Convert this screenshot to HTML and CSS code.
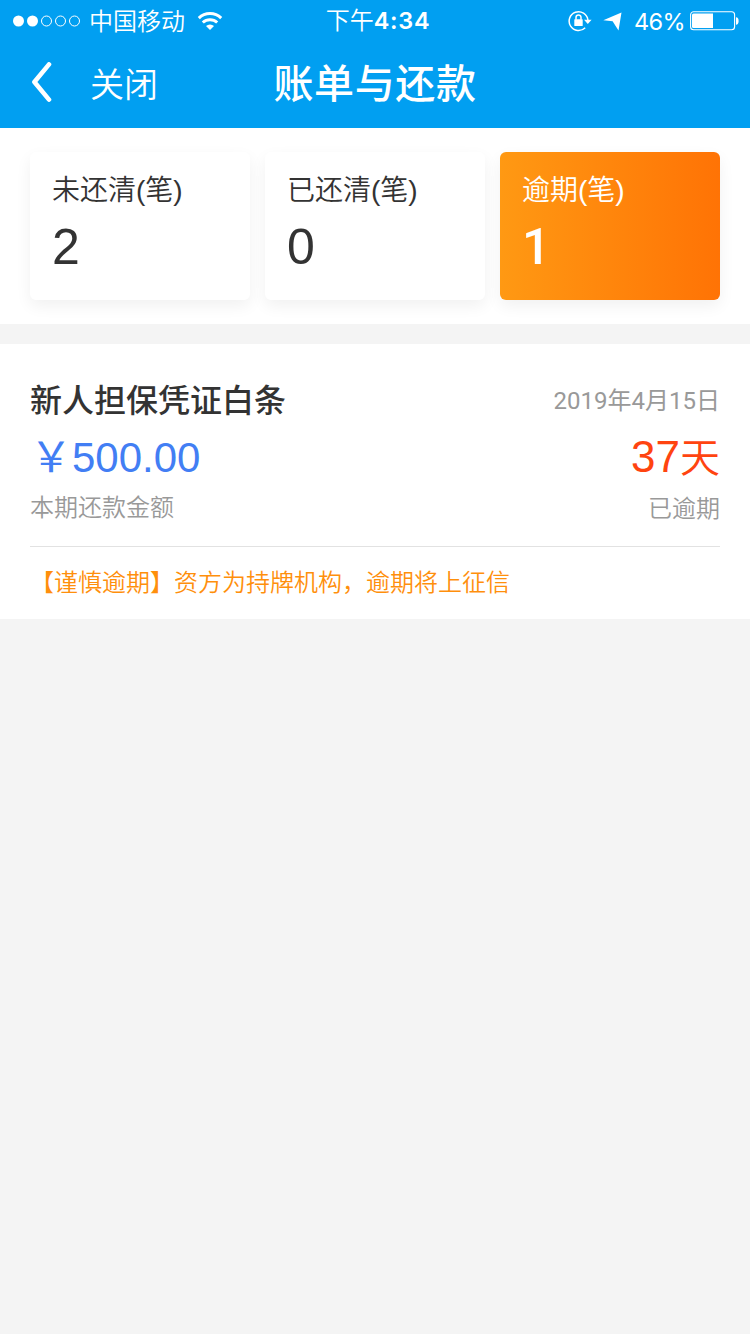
FILE: index.html
```html
<!DOCTYPE html>
<html lang="zh-CN">
<head>
<meta charset="utf-8">
<title>账单与还款</title>
<link rel="stylesheet" href="styles.css">
</head>
<body>
<header class="header">
  <div class="status">
    <div class="status-left">
      <svg class="signal" width="68" height="12" viewBox="0 0 68 12" fill="none" stroke="#fff">
        <circle cx="5.5" cy="6" r="5.5" fill="#fff" stroke="none"/>
        <circle cx="19.5" cy="6" r="5.5" fill="#fff" stroke="none"/>
        <circle cx="33.5" cy="6" r="5"/>
        <circle cx="47.5" cy="6" r="5"/>
        <circle cx="61.5" cy="6" r="5"/>
      </svg>
      <span class="carrier">中国移动</span>
      <svg class="wifi" width="26" height="20" viewBox="0 0 26 20" fill="none" stroke="#fff" stroke-width="3">
        <path d="M1.8 7.1a16.2 16.2 0 0 1 22.4 0"/>
        <path d="M5.8 11.5a10.5 10.5 0 0 1 14.4 0"/>
        <path d="M13 19L9 15a6 6 0 0 1 8 0z" fill="#fff" stroke="none"/>
      </svg>
    </div>
    <div class="clock">下午<b class="clock-digits">4:34</b></div>
    <div class="status-right">
      <svg class="lock" width="24" height="22" viewBox="0 0 24 22" fill="none" stroke="#fff">
        <path d="M17.2 17.8A9.4 9.4 0 1 1 19.9 10" stroke-width="1.5"/>
        <path d="M16 9.8h7.6L19.8 14z" fill="#fff" stroke="none"/>
        <rect x="6.3" y="9.2" width="8.4" height="6.8" rx="0.6" fill="#fff" stroke="none"/>
        <path d="M8 9.8V7.4a2.5 2.5 0 0 1 5 0v2.4" stroke-width="1.5"/>
      </svg>
      <svg class="arrow" width="19" height="19" viewBox="0 0 19 19" fill="#fff"><path d="M18.5 0.4L0.3 8.3l9.3 1 5.9 9.3z"/></svg>
      <span class="percent">46%</span>
      <svg class="battery" width="49" height="20" viewBox="0 0 49 20" fill="#fff">
        <rect x="0.6" y="0.8" width="44" height="18" rx="3" fill="none" stroke="#fff" stroke-width="1.1"/>
        <path d="M3.5 2.5H23v14.6H3.5a1.5 1.5 0 0 1-1.5-1.5V4a1.5 1.5 0 0 1 1.5-1.5z"/>
        <path d="M46 6.3a2.6 3.7 0 0 1 0 7.4z"/>
      </svg>
    </div>
  </div>
  <nav class="nav">
    <div class="nav-left">
      <svg width="22" height="40" viewBox="0 0 22 40" fill="none" stroke="#fff" stroke-width="4.6" stroke-linecap="round" stroke-linejoin="round"><path d="M19 2.4L4.4 20 19 37.6"/></svg>
      <span class="close">关闭</span>
    </div>
    <h1 class="title">账单与还款</h1>
  </nav>
</header>
<section class="summary">
  <div class="card"><div class="card-label">未还清(笔)</div><div class="card-count">2</div></div>
  <div class="card"><div class="card-label">已还清(笔)</div><div class="card-count">0</div></div>
  <div class="card card-active"><div class="card-label">逾期(笔)</div><div class="card-count">1</div></div>
</section>
<section class="bill">
  <div class="row row-head"><h2 class="name">新人担保凭证白条</h2><span class="date">2019年4月15日</span></div>
  <div class="row row-value"><span class="amount">￥500.00</span><span class="days">37<span class="unit">天</span></span></div>
  <div class="row row-note"><span>本期还款金额</span><span class="overdue">已逾期</span></div>
  <p class="warning">【谨慎逾期】资方为持牌机构，逾期将上征信</p>
</section>
</body>
</html>
```
FILE: styles.css
```css
* { box-sizing: border-box; margin: 0; padding: 0; }
body {
  background: #f4f4f4;
  color: #333;
  font-family: "Liberation Sans", "Noto Sans CJK SC", sans-serif;
  font-weight: 350;
  min-height: 1334px;
}
svg { display: block; flex: none; }
.header { height: 128px; background: #019ff1; color: #fff; }
.status {
  display: grid;
  grid-template-columns: 1fr auto 1fr;
  height: 40px;
  padding: 0 11px 0 13px;
  font-size: 24px;
  line-height: 40px;
  white-space: nowrap;
}
.status-left, .status-right { display: flex; align-items: center; }
.status-right { justify-content: flex-end; }
.carrier { margin-left: 8px; padding-top: 2px; }
.wifi { margin-left: 12px; }
.clock { padding: 1px 0 0 4px; }
.clock-digits { font-family: Inter, sans-serif; font-weight: 600; font-size: 23.5px; letter-spacing: 0.7px; }
.arrow { margin-left: 11px; }
.percent { margin-left: 12px; padding-top: 1px; font-family: Inter, sans-serif; font-size: 23.5px; letter-spacing: -0.6px; font-weight: 400; }
.battery { margin-left: 5px; }
.nav {
  display: grid;
  grid-template-columns: 1fr auto 1fr;
  align-items: center;
  height: 84px;
  padding: 0 30px;
}
.nav-left { display: flex; align-items: center; }
.close { margin-left: 38px; padding-top: 5px; font-size: 34px; line-height: 40px; }
.title { padding-top: 3px; font-size: 40px; font-weight: 500; line-height: 50px; letter-spacing: 0.6px; }
.summary {
  display: grid;
  grid-template-columns: repeat(3, 1fr);
  gap: 15px;
  height: 196px;
  padding: 24px 30px;
  background: #fff;
}
.card {
  padding: 19px 22px;
  border-radius: 6px;
  background: #fff;
  box-shadow: 0 6px 16px rgba(0, 0, 0, 0.06);
}
.card-active { color: #fff; background: linear-gradient(90deg, #ff9913, #ff7305); }
.card-label { font-size: 28px; line-height: 40px; }
.card-count { font-size: 50px; font-weight: 400; line-height: 56px; margin-top: 8px; }
.card-active .card-count { font-family: Roboto, sans-serif; font-weight: 500; }
.bill { margin-top: 20px; height: 275px; padding: 29px 30px 0; background: #fff; }
.row { display: flex; align-items: center; justify-content: space-between; }
.row-head { height: 50px; }
.name { font-size: 32px; font-weight: 500; }
.date { font-family: Roboto, "Noto Sans CJK SC", sans-serif; font-size: 24px; font-weight: 400; color: #999; }
.row-value { height: 69px; line-height: 69px; }
.amount { font-size: 42px; font-weight: 400; color: #427ef4; }
.days { font-size: 44px; color: #ff4410; }
.unit { font-size: 40px; }
.row-note { height: 55px; padding-bottom: 27px; font-size: 24px; color: #999; border-bottom: 1px solid #e2e2e2; }
.overdue { padding-top: 1px; }
.warning { font-size: 24px; line-height: 72px; color: #ff8f0c; }
```
